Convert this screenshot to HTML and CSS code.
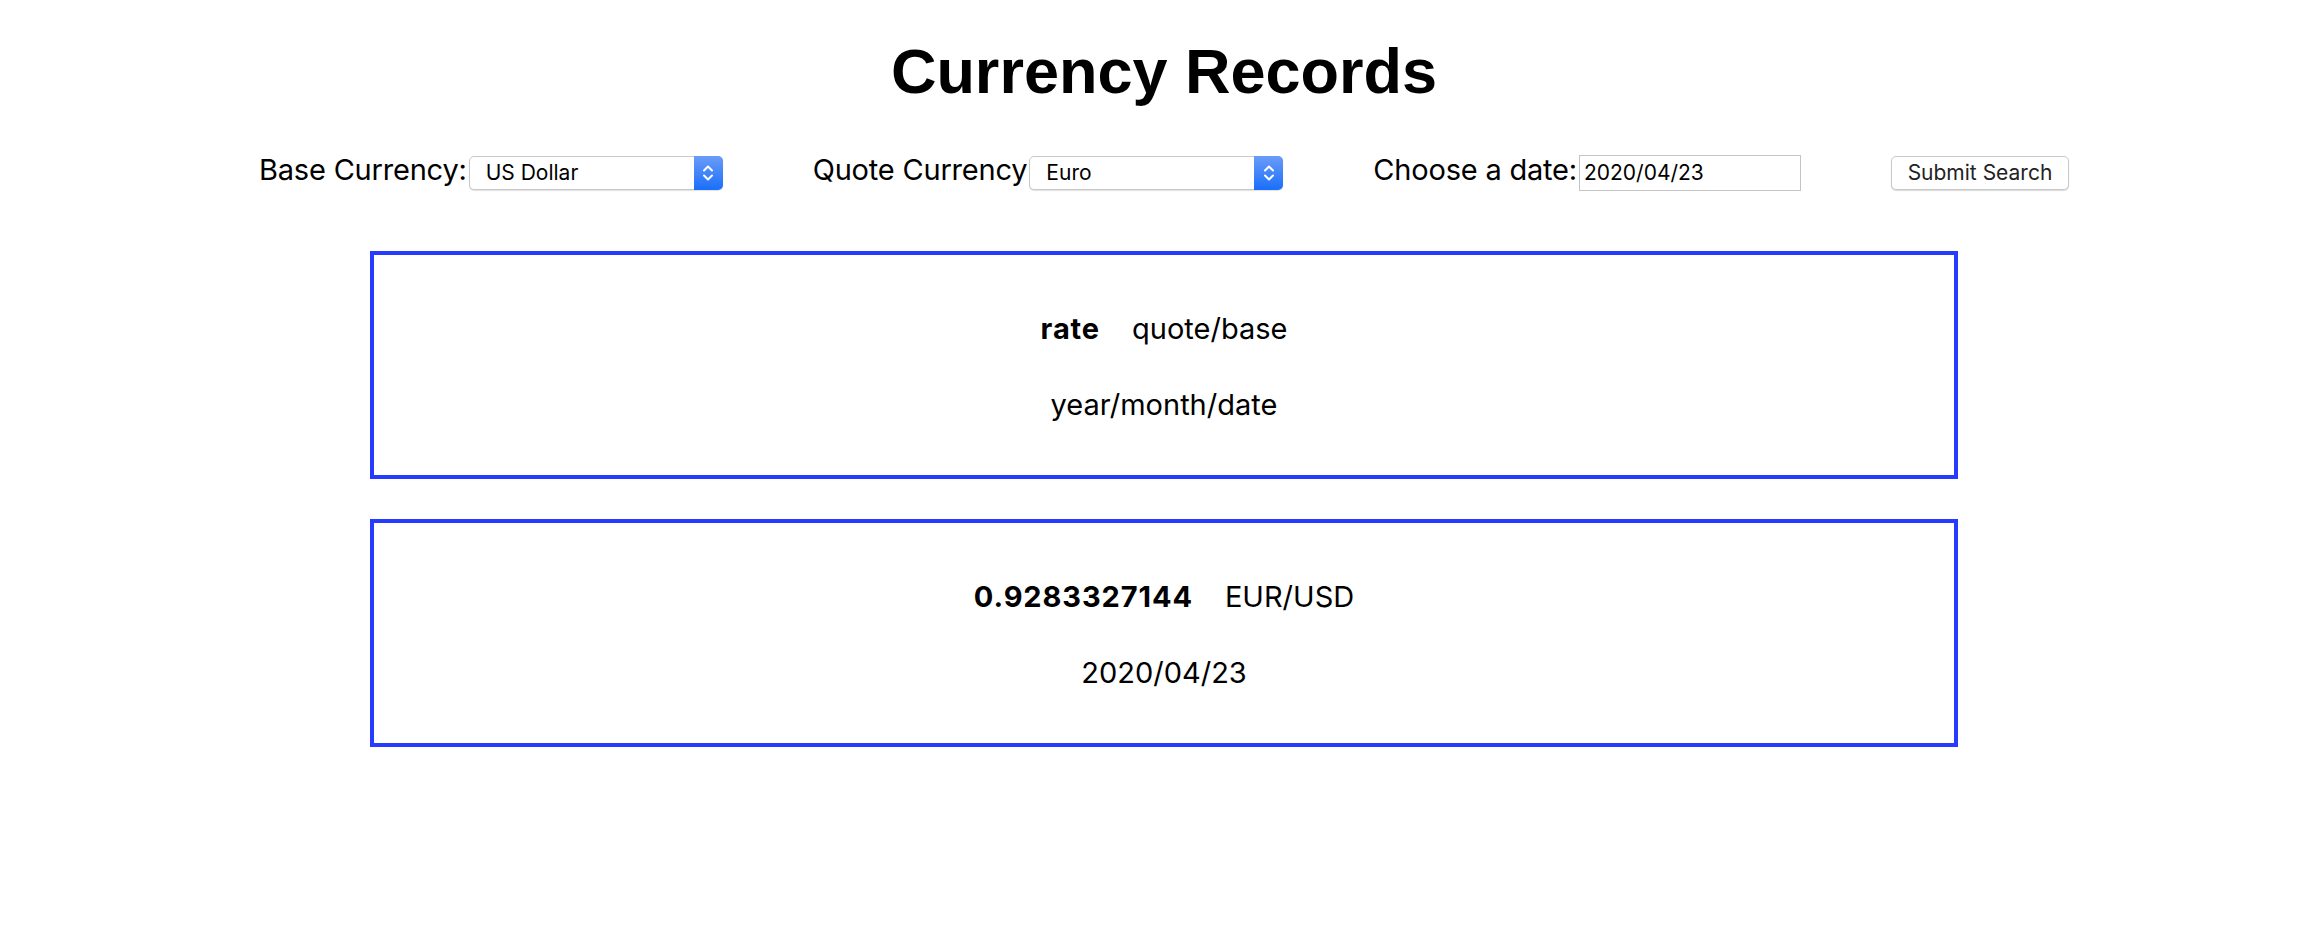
FILE: index.html
```html
<!DOCTYPE html>
<html lang="en">
<head>
<meta charset="utf-8">
<title>Currency Records</title>
<link rel="stylesheet" href="styles.css">
</head>
<body>
<main class="page">
  <h1 class="title">Currency Records</h1>
  <form class="controls">
    <div class="field">
      <label class="field-label" for="base">Base Currency:</label>
      <span class="select-wrap">
        <select id="base" class="select"><option>US Dollar</option></select>
        <span class="select-arrow"><svg width="12" height="20" viewBox="0 0 12 20"><path d="M2 7.5 L6 3.5 L10 7.5" fill="none" stroke="#fff" stroke-width="2" stroke-linecap="round" stroke-linejoin="round"/><path d="M2 12.5 L6 16.5 L10 12.5" fill="none" stroke="#fff" stroke-width="2" stroke-linecap="round" stroke-linejoin="round"/></svg></span>
      </span>
    </div>
    <div class="field">
      <label class="field-label" for="quote">Quote Currency</label>
      <span class="select-wrap">
        <select id="quote" class="select"><option>Euro</option></select>
        <span class="select-arrow"><svg width="12" height="20" viewBox="0 0 12 20"><path d="M2 7.5 L6 3.5 L10 7.5" fill="none" stroke="#fff" stroke-width="2" stroke-linecap="round" stroke-linejoin="round"/><path d="M2 12.5 L6 16.5 L10 12.5" fill="none" stroke="#fff" stroke-width="2" stroke-linecap="round" stroke-linejoin="round"/></svg></span>
      </span>
    </div>
    <div class="field">
      <label class="field-label" for="date">Choose a date:</label>
      <input id="date" class="date-input" type="text" value="2020/04/23">
    </div>
    <button type="button" class="submit">Submit Search</button>
  </form>
  <section class="record">
    <p class="record-line"><span class="rate">rate</span><span class="pair">quote/base</span></p>
    <p class="record-line">year/month/date</p>
  </section>
  <section class="record">
    <p class="record-line"><span class="rate">0.9283327144</span><span class="pair">EUR/USD</span></p>
    <p class="record-line">2020/04/23</p>
  </section>
</main>
</body>
</html>
```
FILE: styles.css
```css
html, body {
  margin: 0;
  padding: 0;
  background: #fff;
}
body {
  padding-left: 8px;
  font-family: Inter, "Noto Sans", sans-serif;
  color: #000;
}
.page {
  padding-top: 35px;
}
.title {
  margin: 0;
  font-family: "Liberation Sans", Arial, sans-serif;
  font-weight: 700;
  font-size: 63px;
  line-height: 72px;
  text-align: center;
}
.controls {
  margin: 45px 0 0;
  display: flex;
  justify-content: center;
  align-items: baseline;
  gap: 90px;
}
.field {
  display: flex;
  align-items: baseline;
  gap: 2px;
}
.field-label {
  font-size: 29px;
  line-height: 36px;
  letter-spacing: -0.2px;
}
.select-wrap {
  position: relative;
  display: inline-block;
}
.select {
  appearance: none;
  -webkit-appearance: none;
  width: 254px;
  height: 34px;
  box-sizing: border-box;
  margin: 0;
  padding: 0 34px 0 16px;
  border: 1px solid #c9c9c9;
  border-radius: 5px;
  background: #fff;
  box-shadow: 0 1px 1px rgba(0,0,0,0.12);
  font-family: Inter, "Noto Sans", sans-serif;
  font-size: 21px;
  color: #000;
}
.select-arrow {
  position: absolute;
  top: 0;
  right: 0;
  width: 29px;
  height: 34px;
  border-radius: 0 5px 5px 0;
  background: linear-gradient(#6a9cf7, #1a6ffb);
  display: flex;
  align-items: center;
  justify-content: center;
  pointer-events: none;
}
.date-input {
  width: 222px;
  height: 36px;
  box-sizing: border-box;
  margin: 0;
  padding: 0 4px;
  border: 1px solid #c4c4c4;
  border-radius: 0;
  font-family: Inter, "Noto Sans", sans-serif;
  font-size: 21px;
  color: #000;
}
.submit {
  width: 178px;
  height: 34px;
  box-sizing: border-box;
  margin: 0;
  padding: 0;
  border: 1px solid #c9c9c9;
  border-radius: 5px;
  background: #fff;
  box-shadow: 0 1px 1px rgba(0,0,0,0.15);
  font-family: Inter, "Noto Sans", sans-serif;
  font-size: 21px;
  color: #222;
}
.record {
  box-sizing: border-box;
  width: 1588px;
  height: 228px;
  margin: 60px auto 0;
  padding-top: 57px;
  border: 4px solid #263bff;
  display: flex;
  flex-direction: column;
  align-items: center;
  gap: 42px;
}
.record + .record {
  margin-top: 40px;
}
.record-line {
  margin: 0;
  font-size: 29px;
  line-height: 34px;
  display: flex;
  gap: 32px;
}
.rate {
  font-weight: 700;
  letter-spacing: 0.9px;
}
```
